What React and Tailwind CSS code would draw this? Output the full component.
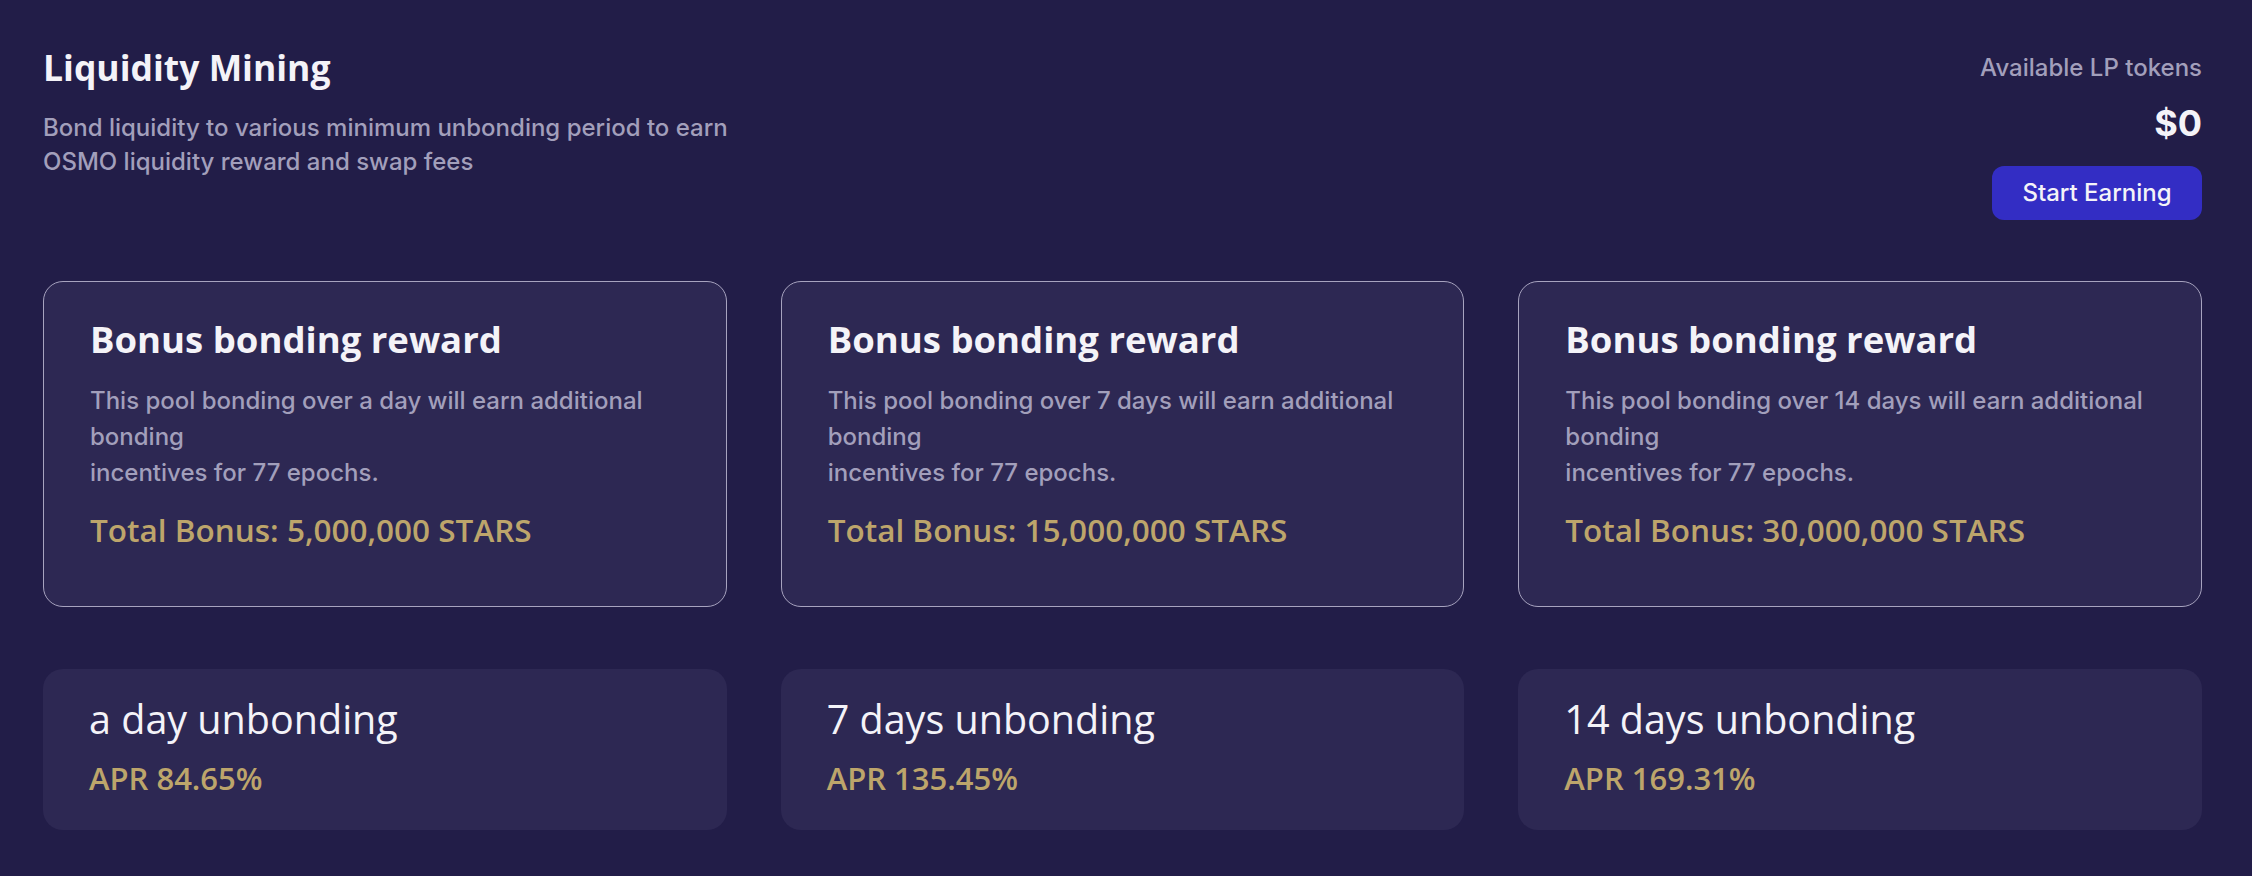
const heading = { fontFamily: '"Open Sans", "Noto Sans", sans-serif' };

const bonuses = [
    { period: 'a day', total: '5,000,000', apr: '84.65%' },
    { period: '7 days', total: '15,000,000', apr: '135.45%' },
    { period: '14 days', total: '30,000,000', apr: '169.31%' },
];

const App = () => {
    return (
        <div className="min-h-screen w-full bg-[#221d48] pl-[43px] pr-[50px] pt-[43px] pb-10 font-['Inter',sans-serif]">
            <div className="flex justify-between items-start">
                <div>
                    <h1 className="text-[35.5px] leading-[48px] font-bold text-[#f4f3f8]" style={heading}>Liquidity Mining</h1>
                    <p className="mt-[20px] text-[24px] leading-[34px] text-[#a29fbb] font-medium">
                        Bond liquidity to various minimum unbonding period to earn
                        <br />
                        OSMO liquidity reward and swap fees
                    </p>
                </div>
                <div className="flex flex-col items-end pt-[9px]">
                    <div className="text-[24px] leading-[32px] font-medium text-[#a29fbb]">Available LP tokens</div>
                    <div className="mt-[17px] text-[36px] leading-[44px] font-bold text-[#f4f3f8]">$0</div>
                    <button className="mt-[21px] h-[54px] w-[210px] rounded-[12px] bg-[#332dc4] text-[24px] font-medium text-[#f4f3f8]">
                        Start Earning
                    </button>
                </div>
            </div>

            <div className="mt-[61px] grid grid-cols-3 gap-[54px]">
                {bonuses.map(b => (
                    <div key={b.period} className="h-[326px] rounded-[20px] border-[1.5px] border-[#a7a3bf] bg-[#2d2853] px-[46px] pt-[33px]">
                        <h2 className="text-[36.5px] leading-[48px] font-bold text-[#f4f3f8]" style={heading}>Bonus bonding reward</h2>
                        <p className="mt-[20px] text-[24px] leading-[36px] font-medium text-[#a29fbb]">
                            {`This pool bonding over ${b.period} will earn additional bonding`}
                            <br />
                            incentives for 77 epochs.
                        </p>
                        <div className="mt-[19px] text-[31.5px] leading-[40px] font-semibold text-[#bda56b]" style={heading}>
                            {`Total Bonus: ${b.total} STARS`}
                        </div>
                    </div>
                ))}
            </div>

            <div className="mt-[62px] grid grid-cols-3 gap-[54px]">
                {bonuses.map(b => (
                    <div key={b.period} className="h-[161px] rounded-[20px] bg-[#2d2853] px-[46px] pt-[28px]">
                        <div className="text-[39.5px] leading-[45px] font-medium text-[#f4f3f8]" style={heading}>{`${b.period} unbonding`}</div>
                        <div className="mt-[16px] text-[31px] leading-[40px] font-semibold text-[#bda56b]" style={heading}>{`APR ${b.apr}`}</div>
                    </div>
                ))}
            </div>
        </div>
    );
};

export default App;
